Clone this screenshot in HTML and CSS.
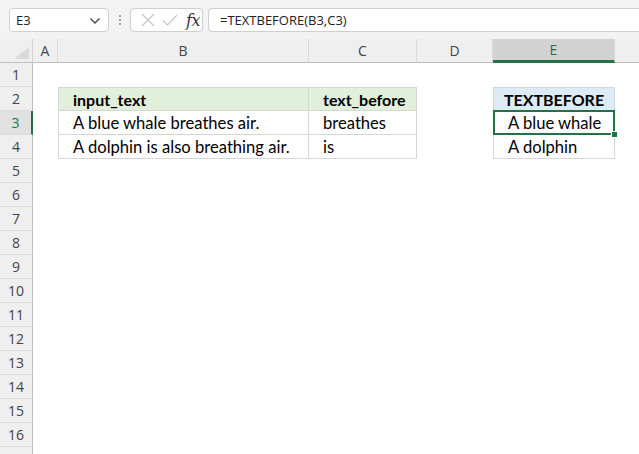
FILE: index.html
```html
<!DOCTYPE html>
<html>
<head>
<meta charset="utf-8">
<link rel="stylesheet" href="styles.css">
</head>
<body>
<div class="app">
  <div class="toolbar">
    <div class="namebox">
      <span class="nb-text">E3</span>
      <svg class="chev" width="12" height="8" viewBox="0 0 12 8"><path d="M1.5 1.5 L6 6 L10.5 1.5" fill="none" stroke="#444" stroke-width="1.3"/></svg>
    </div>
    <div class="dots"><i></i><i></i><i></i></div>
    <div class="fxbox">
      <svg width="14" height="14" viewBox="0 0 14 14"><path d="M1 1 L13 13 M13 1 L1 13" stroke="#c4c4c4" stroke-width="1.2" fill="none"/></svg>
      <svg width="16" height="14" viewBox="0 0 16 14"><path d="M1 7.5 L5.5 12 L15 2" stroke="#c4c4c4" stroke-width="1.2" fill="none"/></svg>
      <span class="fx">fx</span>
    </div>
    <div class="formula">=TEXTBEFORE(B3,C3)</div>
  </div>

  <div class="sheet">
    <div class="row hdr">
      <div class="corner"><span class="tri"></span></div>
      <div class="ch">A</div>
      <div class="ch">B</div>
      <div class="ch">C</div>
      <div class="ch">D</div>
      <div class="ch sel">E</div>
      <div class="ch last"></div>
    </div>

    <div class="row"><div class="rh">1</div><div></div><div></div><div></div><div></div><div></div><div></div></div>

    <div class="row">
      <div class="rh">2</div><div></div>
      <div class="c t th-g l">input_text</div>
      <div class="c t th-g">text_before</div>
      <div></div>
      <div class="c t th-b l center">TEXTBEFORE</div>
      <div></div>
    </div>

    <div class="row">
      <div class="rh rsel">3</div><div></div>
      <div class="c l">A blue whale breathes air.</div>
      <div class="c">breathes</div>
      <div></div>
      <div class="c l active">A blue whale<span class="handle"></span></div>
      <div></div>
    </div>

    <div class="row">
      <div class="rh">4</div><div></div>
      <div class="c l">A dolphin is also breathing air.</div>
      <div class="c">is</div>
      <div></div>
      <div class="c l">A dolphin</div>
      <div></div>
    </div>

    <div class="row"><div class="rh">5</div></div>
    <div class="row"><div class="rh">6</div></div>
    <div class="row"><div class="rh">7</div></div>
    <div class="row"><div class="rh">8</div></div>
    <div class="row"><div class="rh">9</div></div>
    <div class="row"><div class="rh">10</div></div>
    <div class="row"><div class="rh">11</div></div>
    <div class="row"><div class="rh">12</div></div>
    <div class="row"><div class="rh">13</div></div>
    <div class="row"><div class="rh">14</div></div>
    <div class="row"><div class="rh">15</div></div>
    <div class="row"><div class="rh">16</div></div>
    <div class="row"><div class="rh"></div></div>
  </div>
</div>
</body>
</html>
```

FILE: styles.css
```css
* { box-sizing: border-box; }
html, body { margin: 0; padding: 0; }
body {
  width: 639px;
  height: 454px;
  overflow: hidden;
  background: #ffffff;
  font-family: "Open Sans", "Noto Sans", sans-serif;
}
.app { width: 639px; }

.toolbar {
  height: 39px;
  background: #f3f3f3;
  display: flex;
  align-items: flex-start;
  padding-top: 8px;
  padding-left: 9px;
  overflow: hidden;
  white-space: nowrap;
}
.toolbar > * { flex-shrink: 0; }
.namebox {
  width: 100px;
  height: 24px;
  background: #fff;
  border: 1px solid #cfcfcf;
  border-radius: 4px;
  display: flex;
  align-items: center;
  justify-content: space-between;
  padding: 0 7px 0 6px;
  font-size: 13px;
  color: #222;
}
.chev { margin-top: 1px; }
.dots {
  width: 21px;
  height: 24px;
  display: flex;
  flex-direction: column;
  align-items: center;
  justify-content: center;
  gap: 2px;
}
.dots i {
  display: block;
  width: 2px;
  height: 2px;
  background: #8a8a8a;
  border-radius: 1px;
}
.fxbox {
  width: 73px;
  height: 24px;
  background: #fff;
  border: 1px solid #cfcfcf;
  border-radius: 4px;
  display: flex;
  align-items: center;
  padding-left: 10px;
  gap: 7px;
}
.fx {
  font-family: "DejaVu Serif", "Liberation Serif", serif;
  font-style: italic;
  font-size: 16px;
  color: #333;
  margin-left: 1px;
  letter-spacing: -0.5px;
}
.formula {
  margin-left: 5px;
  width: 440px;
  height: 24px;
  background: #fff;
  border: 1px solid #cfcfcf;
  border-right: none;
  border-radius: 4px 0 0 4px;
  padding-left: 11px;
  font-size: 13px;
  line-height: 22px;
  color: #222;
}

.sheet { background: #fff; }
.row {
  display: grid;
  grid-template-columns: 33px 25px 251px 108px 76px 122px 24px;
  height: 24px;
}
.row > div { height: 24px; }

.hdr { background: #efefef; }
.hdr > div { border-bottom: 1px solid #bdbdbd; }
.corner {
  position: relative;
  border-right: 1px solid #d4d4d4;
}
.tri {
  position: absolute;
  right: 3px;
  bottom: 3px;
  width: 0;
  height: 0;
  border-left: 15px solid transparent;
  border-bottom: 12px solid #dadada;
}
.ch {
  border-right: 1px solid #d9d9d9;
  text-align: center;
  font-size: 14px;
  line-height: 23px;
  color: #444;
}
.ch.last { border-right: none; }
.ch.sel {
  background: #d2d2d2;
  color: #217346;
  border-bottom: 3px solid #217346 !important;
  line-height: 22px;
}

.rh {
  background: #efefef;
  border-right: 1px solid #bdbdbd;
  border-bottom: 1px solid #dadada;
  text-align: center;
  font-size: 14px;
  line-height: 23px;
  color: #444;
}
.rh.rsel {
  background: #e1e1e1;
  color: #217346;
  border-right: 2px solid #217346;
}

.c {
  font-family: "Lato", "Open Sans", sans-serif;
  font-size: 16.6px;
  line-height: 23px;
  padding-top: 1px;
  color: #000;
  padding-left: 14px;
  border-right: 1px solid #d6d6d6;
  border-bottom: 1px solid #d6d6d6;
  white-space: nowrap;
}
.c.l { border-left: 1px solid #d6d6d6; }
.c.t { border-top: 1px solid #d6d6d6; line-height: 22px; padding-top: 1px; font-weight: bold; font-size: 16px; }
.th-g { background: #e2efda; }
.th-b { background: #ddebf7; }
.center { text-align: center; padding-left: 0; }

.active { position: relative; }
.active::after {
  content: "";
  position: absolute;
  left: -1px;
  top: -1px;
  right: -1px;
  bottom: -1px;
  border: 2px solid #217346;
}
.handle {
  position: absolute;
  right: -4px;
  bottom: -4px;
  width: 7px;
  height: 7px;
  background: #217346;
  border: 1px solid #fff;
  z-index: 2;
}
```
